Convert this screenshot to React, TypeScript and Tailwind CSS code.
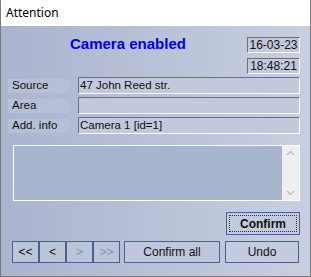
import React from "react";

const sunken =
  "border-t border-l border-t-[#6f6f6f] border-l-[#6f6f6f] border-b border-r border-b-white border-r-white bg-[#c3c9dc]";

function NavBtn({ label, disabled }: { label: string; disabled?: boolean }) {
  return (
    <div
      className={`w-[27px] h-[22px] border border-[#4a6291] bg-[#bcc4d9] flex items-center justify-center text-[12px] ${
        disabled ? "text-[#8590a8]" : "text-[#111]"
      }`}
    >
      {label}
    </div>
  );
}

export default function App() {
  return (
    <div
      className="w-[311px] h-[277px] flex flex-col border-x border-b border-[#7c7c7c] overflow-hidden"
      style={{ fontFamily: "'Liberation Sans', Arial, sans-serif" }}
    >
      <div
        className="h-[26px] bg-white flex items-center pl-[5px] text-[12px] text-black shrink-0"
        style={{ fontFamily: "'Noto Sans', 'Liberation Sans', sans-serif" }}
      >
        Attention
      </div>
      <div className="flex-1 flex flex-col pl-[7px] pr-[10px] bg-gradient-to-r from-[#a9b4cf] to-[#c9cfe0]">
        <div className="flex pt-[11px]">
          <div className="flex-1 pl-[62px]">
            <div className="text-[15px] leading-[14px] font-bold text-[#0000e6]">Camera enabled</div>
          </div>
          <div className="flex flex-col gap-[5px]">
            <div className={`w-[53px] h-[16px] ${sunken} flex items-center justify-center text-[12px] text-[#111]`}>
              16-03-23
            </div>
            <div className={`w-[53px] h-[16px] ${sunken} flex items-center justify-center text-[12px] text-[#111]`}>
              18:48:21
            </div>
          </div>
        </div>

        <div className="flex flex-col gap-[3px] mt-[3px]">
          {[
            ["Source", "47 John Reed str."],
            ["Area", ""],
            ["Add. info", "Camera 1 [id=1]"],
          ].map(([l, v]) => (
            <div key={l} className="flex items-center h-[17px]">
              <div className="w-[61px] h-[14px] bg-[#b7bfd6] flex items-center pl-[4px] text-[11.5px] text-[#111]">
                {l}
              </div>
              <div className={`ml-[9px] flex-1 h-[17px] ${sunken} flex items-center pl-[1px] text-[11.5px] text-[#111]`}>
                {v}
              </div>
            </div>
          ))}
        </div>

        <div className="ml-[5px] mt-[11px] h-[56px] border border-white bg-[#a7b5cf] flex justify-end">
          <div className="w-[17px] h-full bg-[#efefef] flex flex-col items-center justify-between py-[4px]">
            <svg width="9" height="6" viewBox="0 0 9 6">
              <path d="M1 5 L4.5 1.5 L8 5" fill="none" stroke="#b9b9b9" strokeWidth="1.2" />
            </svg>
            <svg width="9" height="6" viewBox="0 0 9 6">
              <path d="M1 1 L4.5 4.5 L8 1" fill="none" stroke="#b9b9b9" strokeWidth="1.2" />
            </svg>
          </div>
        </div>

        <div className="flex justify-end mt-[11px]">
          <div className="w-[74px] h-[23px] border border-[#4a6291] bg-[#c3cadd] p-[2px]">
            <div className="w-full h-full border border-dotted border-[#333] flex items-center justify-center text-[12px] font-bold text-[#111]">
              Confirm
            </div>
          </div>
        </div>

        <div className="flex mt-[6px] pl-[4px]">
          <NavBtn label="<<" />
          <NavBtn label="<" />
          <NavBtn label=">" disabled />
          <NavBtn label=">>" disabled />
          <div className="ml-[4px] w-[96px] h-[22px] border border-[#4a6291] bg-[#c0c7dc] flex items-center justify-center text-[12px] text-[#111]">
            Confirm all
          </div>
          <div className="ml-[5px] w-[74px] h-[22px] border border-[#4a6291] bg-[#c4cbde] flex items-center justify-center text-[12px] text-[#111]">
            Undo
          </div>
        </div>
      </div>
    </div>
  );
}
